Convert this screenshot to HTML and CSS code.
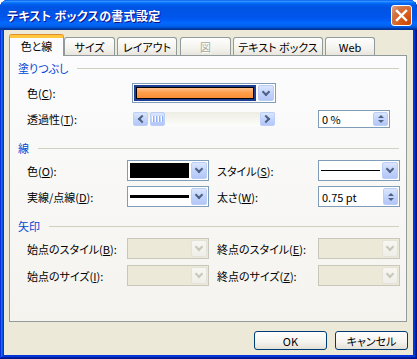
FILE: index.html
```html
<!DOCTYPE html>
<html lang="ja">
<head>
    <meta charset="UTF-8">
    <title>テキスト ボックスの書式設定</title>
    <link rel="stylesheet" href="styles.css">
</head>
<body>

<div class="window">
    <div class="titlebar">
        <span class="title">テキスト ボックスの書式設定</span>
        <span class="close">
            <svg width="21" height="21" viewBox="0 0 21 21"><path d="M6 6 L15 15 M15 6 L6 15" stroke="#fff" stroke-width="2.4" stroke-linecap="square"/></svg>
        </span>
    </div>

    <div class="frame">
        <div class="tabs">
            <div class="tab active">色と線</div>
            <div class="tab">サイズ</div>
            <div class="tab">レイアウト</div>
            <div class="tab disabled">図</div>
            <div class="tab">テキスト ボックス</div>
            <div class="tab">Web</div>
        </div>

        <div class="panel">
            <!-- fill -->
            <div class="group-title">塗りつぶし</div>
            <div class="row row-fill">
                <span class="label label-fill">色(<u>C</u>):</span>
                <div class="combo combo-fill">
                    <div class="value focused"><span class="swatch orange"></span></div>
                    <span class="drop"></span>
                </div>
            </div>
            <div class="row row-alpha">
                <span class="label label-alpha">透過性(<u>T</u>):</span>
                <div class="scroll">
                    <span class="sbtn left"></span>
                    <span class="thumb"><i></i><i></i><i></i><i></i></span>
                    <span class="track"></span>
                    <span class="sbtn right"></span>
                </div>
                <div class="spin spin-alpha">
                    <span class="text">0 %</span>
                    <span class="spin-btn"><b class="up"></b><b class="down"></b></span>
                </div>
            </div>

            <!-- line -->
            <div class="group-title">線</div>
            <div class="row row-line">
                <span class="label">色(<u>O</u>):</span>
                <div class="combo">
                    <div class="value"><span class="swatch black"></span></div>
                    <span class="drop"></span>
                </div>
                <span class="label label-right">スタイル(<u>S</u>):</span>
                <div class="combo">
                    <div class="value"><span class="stroke thin"></span></div>
                    <span class="drop"></span>
                </div>
            </div>
            <div class="row row-line2">
                <span class="label">実線/点線(<u>D</u>):</span>
                <div class="combo">
                    <div class="value"><span class="stroke thick"></span></div>
                    <span class="drop"></span>
                </div>
                <span class="label label-right">太さ(<u>W</u>):</span>
                <div class="spin">
                    <span class="text">0.75 pt</span>
                    <span class="spin-btn"><b class="up"></b><b class="down"></b></span>
                </div>
            </div>

            <!-- arrows -->
            <div class="group-title">矢印</div>
            <div class="row row-arrow">
                <span class="label">始点のスタイル(<u>B</u>):</span>
                <div class="combo off"><div class="value"></div><span class="drop"></span></div>
                <span class="label label-right">終点のスタイル(<u>E</u>):</span>
                <div class="combo off"><div class="value"></div><span class="drop"></span></div>
            </div>
            <div class="row row-arrow2">
                <span class="label">始点のサイズ(<u>I</u>):</span>
                <div class="combo off"><div class="value"></div><span class="drop"></span></div>
                <span class="label label-right">終点のサイズ(<u>Z</u>):</span>
                <div class="combo off"><div class="value"></div><span class="drop"></span></div>
            </div>
        </div>

        <div class="actions">
            <button class="btn">OK</button>
            <button class="btn">キャンセル</button>
        </div>
    </div>
</div>

</body>
</html>
```

FILE: styles.css
```css
* {
    box-sizing: border-box;
}
body {
    margin: 0;
    font-family: "Noto Sans CJK JP", "Liberation Sans", sans-serif;
    font-size: 11px;
    font-feature-settings: "palt";
    color: #000;
    background: #fff;
}
u {
    text-decoration: underline;
    text-underline-offset: 1px;
}

/* window frame */
.window {
    width: 417px;
    height: 359px;
    display: flex;
    flex-direction: column;
    background: #0831d9;
    border-radius: 8px 8px 0 0;
    box-shadow: inset -1px -1px #00138c, inset 1px 1px #0831d9, inset -2px -2px #001ea0,
                inset 2px 2px #166aee, inset -3px -3px #003bda, inset 3px 3px #0855dd;
}
.titlebar {
    height: 30px;
    flex-shrink: 0;
    display: flex;
    align-items: center;
    padding: 0 5px 0 7px;
    border-radius: 8px 8px 0 0;
    background: linear-gradient(180deg, #0058ee 0%, #3593ff 4%, #288eff 6%, #127dff 8%, #036ffc 10%,
                #0262ee 14%, #0057e5 20%, #0054e3 24%, #0055eb 56%, #005bf5 66%, #026afe 76%,
                #0062ef 86%, #0052d6 92%, #0040ab 94%, #003092 100%);
}
.title {
    flex: 1;
    color: #fff;
    font-size: 12px;
    font-weight: bold;
    letter-spacing: 0.3px;
    text-shadow: 1px 1px #0f1089;
}
.close {
    width: 21px;
    height: 21px;
    border: 1px solid #fff;
    border-radius: 3px;
    background: radial-gradient(circle at 90% 90%, #cc4600 0%, #dc6527 55%, #cd7546 70%, #e5a48a 100%);
    display: flex;
}
.close svg {
    margin: -1px;
}

.frame {
    flex: 1;
    margin: 0 4px 4px;
    background: #ece9d8;
    display: flex;
    flex-direction: column;
}

/* tabs */
.tabs {
    display: flex;
    align-items: flex-end;
    height: 21px;
    margin-top: 5px;
    margin-bottom: -1px;
    padding-left: 5px;
    position: relative;
    z-index: 1;
}
.tab {
    height: 18px;
    margin-bottom: 1px;
    margin-left: 2px;
    border: 1px solid #919b9c;
    border-bottom: none;
    border-radius: 3px 3px 0 0;
    background: linear-gradient(#fefefe, #f4f3ee 60%, #e7e5dc);
    display: flex;
    align-items: center;
    justify-content: center;
    padding-top: 1px;
}
.tab:nth-child(1) { width: 55px; }
.tab:nth-child(2) { width: 51px; margin-left: 0; }
.tab:nth-child(3) { width: 60px; }
.tab:nth-child(4) { width: 51px; margin-left: 3px; }
.tab:nth-child(5) { width: 90px; }
.tab:nth-child(6) { width: 50px; }
.tab.active {
    height: 21px;
    margin-bottom: 0;
    margin-left: 0;
    background: #fcfcfe;
    border-top: 3px solid #ffc83c;
    box-shadow: 0 -1px #e68b2c;
    padding-top: 0;
    padding-bottom: 2px;
}
.tab.disabled {
    color: #aca899;
    text-shadow: 1px 1px #fff;
}

/* tab page */
.panel {
    margin-left: 5px;
    width: 398px;
    height: 267px;
    border: 1px solid #919b9c;
    background: linear-gradient(#fcfcfe, #f4f3ee);
    padding: 5px 5px 0 8px;
}
.group-title {
    display: flex;
    align-items: center;
    height: 13px;
    color: #0046d5;
}
.group-title::after {
    content: "";
    flex: 1;
    height: 1px;
    margin: 1px 2px 0 9px;
    background: #d0d0bf;
}
.row {
    display: flex;
    align-items: center;
    padding-left: 9px;
    height: 21px;
}
.label {
    width: 100px;
    flex-shrink: 0;
    white-space: nowrap;
}
.label-right {
    width: 101px;
    margin-left: 8px;
}
.row-fill { margin-top: 9px; height: 20px; }
.row-alpha { margin-top: 7px; height: 18px; }
.row-line { margin-top: 6px; }
.row-line2 { margin-top: 5px; }
.row-arrow { margin-top: 6px; }
.row-arrow2 { margin-top: 6px; }
.row-alpha + .group-title { margin-top: 13px; }
.row-line2 + .group-title { margin-top: 12px; }
.label-fill { width: 105px; }
.label-alpha { width: 106px; }

/* combo boxes */
.combo {
    display: flex;
    width: 82px;
    height: 21px;
    border: 1px solid #7f9db9;
    background: #fff;
}
.combo-fill {
    width: 144px;
    height: 20px;
}
.value {
    flex: 1;
    display: flex;
    align-items: center;
    padding: 2px 1px 2px 2px;
}
.value.focused {
    padding: 1px 1px 1px 1px;
}
.value.focused .swatch {
    border: 2px solid #1d3e93;
    box-shadow: inset 0 0 0 1px #000;
}
.swatch {
    flex: 1;
    height: 100%;
}
.swatch.orange {
    background: linear-gradient(#ffc99a, #ff9f4e 45%, #fb8a30);
}
.swatch.black {
    background: #000;
}
.stroke {
    flex: 1;
    background: #000;
}
.stroke.thin { height: 1px; }
.stroke.thick { height: 3px; }
.drop {
    width: 16px;
    margin: 1px;
    flex-shrink: 0;
    border: 1px solid #b9cdf6;
    border-radius: 2px;
    background: linear-gradient(#dbe6fd, #c3d4fb 50%, #b3c6f6);
    display: flex;
    align-items: center;
    justify-content: center;
}
.drop::after {
    content: "";
    width: 4px;
    height: 4px;
    margin-top: -3px;
    border-right: 2px solid #4d6185;
    border-bottom: 2px solid #4d6185;
    transform: rotate(45deg);
}
.combo.off {
    border-color: #c9c7ba;
    background: #ece9d8;
}
.combo.off .drop {
    border-color: #e5e3d9;
    background: linear-gradient(#f7f6f1, #efeee8);
}
.combo.off .drop::after {
    border-color: #c9c7ba;
}

/* scroll bar */
.scroll {
    display: flex;
    width: 142px;
    height: 14px;
    background: linear-gradient(#eeede5, #fdfdfa);
}
.sbtn, .thumb {
    width: 15px;
    border: 1px solid #bccff8;
    border-radius: 2px;
    background: linear-gradient(#dbe6fd, #c3d4fb 50%, #b3c6f6);
    display: flex;
    align-items: center;
    justify-content: center;
}
.thumb {
    margin-left: 2px;
    gap: 1px;
}
.thumb i {
    width: 1px;
    height: 6px;
    background: #fff;
    box-shadow: 1px 0 #8cb0f8;
    margin-right: 1px;
}
.track {
    flex: 1;
}
.sbtn::after {
    content: "";
    width: 4px;
    height: 4px;
    border-right: 2px solid #4d6185;
    border-bottom: 2px solid #4d6185;
}
.sbtn.left::after {
    margin-left: 3px;
    transform: rotate(135deg);
}
.sbtn.right::after {
    margin-right: 3px;
    transform: rotate(-45deg);
}

/* spinners */
.spin {
    display: flex;
    width: 82px;
    height: 21px;
    border: 1px solid #7f9db9;
    background: #fff;
}
.spin-alpha {
    width: 72px;
    height: 18px;
    margin-left: 43px;
}
.spin .text {
    flex: 1;
    padding-left: 3px;
    display: flex;
    align-items: center;
}
.spin-btn {
    width: 15px;
    margin: 1px;
    border: 1px solid #b9cdf6;
    border-radius: 2px;
    background: linear-gradient(#dbe6fd, #c3d4fb 50%, #b3c6f6);
    display: flex;
    flex-direction: column;
    align-items: center;
    justify-content: center;
    gap: 2px;
}
.spin-btn b {
    width: 0;
    height: 0;
    border-left: 3px solid transparent;
    border-right: 3px solid transparent;
}
.spin-btn .up {
    border-bottom: 3px solid #4d6185;
}
.spin-btn .down {
    border-top: 3px solid #4d6185;
}

/* dialog buttons */
.actions {
    display: flex;
    justify-content: flex-end;
    gap: 8px;
    margin-top: 9px;
    padding-right: 5px;
}
.btn {
    width: 73px;
    height: 19px;
    padding: 0;
    border: 1px solid #003c74;
    border-radius: 3px;
    background: linear-gradient(#fff, #f4f3ee 60%, #e3e0d6);
    font-family: inherit;
    font-size: 11px;
    font-feature-settings: "palt";
    color: #000;
}
```
